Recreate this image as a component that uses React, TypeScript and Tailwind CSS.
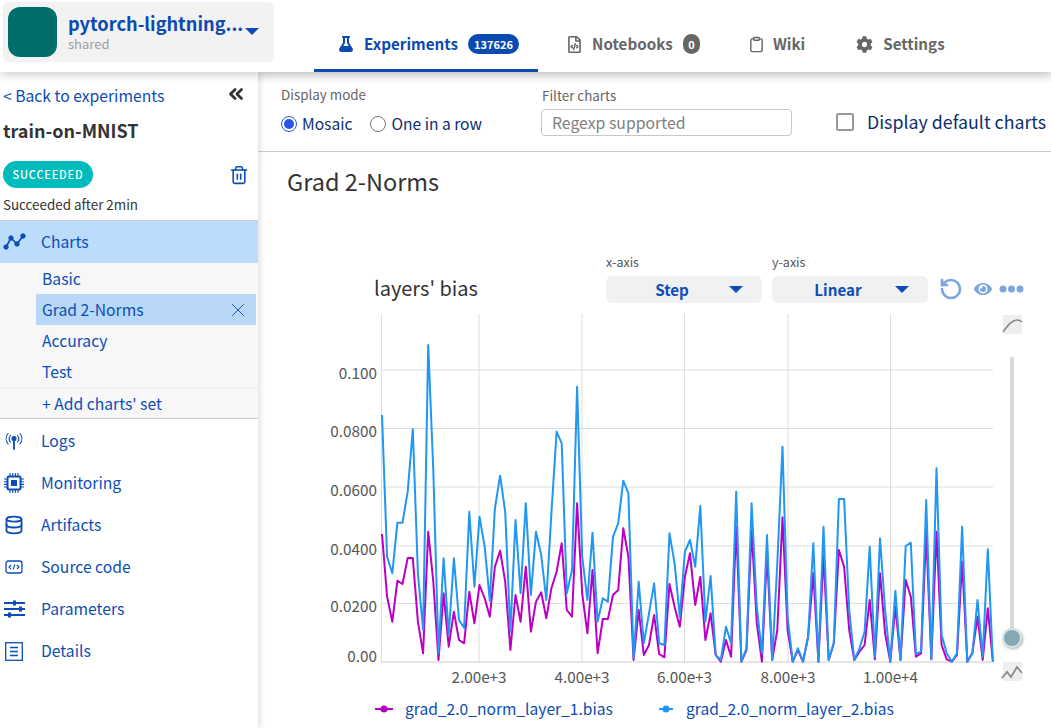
import { Clipboard, Database, RotateCcw, X, ChevronsLeft, Trash2 } from "lucide-react";
import { FaFlask, FaRegFileCode, FaCog, FaEye } from "react-icons/fa";

const B = "#0c4db5";

const seg = (base: number, ys: number[]) => ys.map((z) => base + z / 3);
const blue = [
  ...seg(330, [255, 680, 730, 578, 578, 485, 298, 730, 900, 45, 420, 970, 685, 915, 685, 870, 893, 545, 770, 560, 650, 812, 535, 437, 545, 905, 570, 790]),
  ...seg(380, [370, 645, 455, 525, 660, 400, 155, 190, 640, 570, 20, 530, 660, 458, 725, 655, 665, 470, 430, 302, 340, 835, 605, 790, 700, 610, 790, 795, 460, 550, 710, 515, 480, 560, 378, 725, 588, 825, 840, 740, 790, 335, 845, 805, 370, 680, 820, 465]),
  ...seg(430, [690, 400, 50, 560, 695, 655, 695, 620, 340, 695, 290, 690, 640, 207, 207, 540, 690, 655, 605, 350, 680, 325, 540, 695, 482, 690, 348, 338, 672, 665, 210, 688, 115, 615, 670, 695, 670, 290, 695, 670, 510, 680, 358, 695]),
];
const magenta = [
  ...seg(330, [612, 800, 875, 752, 762, 684, 684, 875, 970, 605, 755, 990, 790, 950, 845, 930, 940, 785, 880, 765, 805, 860, 710, 662, 755, 960, 795, 875]),
  ...seg(380, [560, 755, 665, 637, 715, 625, 575, 490, 690, 710, 370, 640, 760, 570, 820, 717, 717, 645, 630, 445, 530, 840, 690, 825, 795, 705, 822, 832, 612, 680, 740, 590, 520, 675, 590, 780, 700, 825, 845, 780, 830, 440, 845, 810, 450, 730, 845, 520]),
  ...seg(430, [690, 600, 262, 600, 695, 660, 695, 620, 430, 695, 375, 690, 640, 360, 410, 600, 690, 665, 645, 510, 688, 430, 610, 695, 530, 690, 450, 500, 680, 670, 310, 688, 305, 645, 688, 695, 675, 395, 695, 668, 560, 690, 535, 695]),
];
const pts = (a: number[]) => a.map((y, i) => `${(382 + i * 5.134).toFixed(1)},${y.toFixed(1)}`).join(" ");

function Caret({ className = "" }: { className?: string }) {
  return (
    <svg width="14" height="7" viewBox="0 0 14 7" className={className}>
      <path d="M0 0h14L7 7z" fill={B} />
    </svg>
  );
}

function ChartsIcon() {
  return (
    <svg width="24" height="18" viewBox="0 0 24 18" fill={B} stroke={B}>
      <polyline points="4,14 9,5 15,11 21,3" fill="none" strokeWidth="1.6" />
      <circle cx="4" cy="14" r="2.2" />
      <circle cx="9" cy="5" r="2.2" />
      <circle cx="15" cy="11" r="2.2" />
      <circle cx="21" cy="3" r="2.2" />
    </svg>
  );
}
function LogsIcon() {
  return (
    <svg width="20" height="20" viewBox="0 0 20 20" fill="none" stroke={B} strokeWidth="1.1" strokeLinecap="round">
      <circle cx="10" cy="7.5" r="2" fill={B} />
      <path d="M10 8v10" strokeWidth="1.8" />
      <path d="M6.5 4.5a5 5 0 0 0 0 6.5M13.5 4.5a5 5 0 0 1 0 6.5M4 2.5a8.5 8.5 0 0 0 0 10.5M16 2.5a8.5 8.5 0 0 1 0 10.5" />
    </svg>
  );
}
function ChipIcon() {
  return (
    <svg width="20" height="20" viewBox="0 0 20 20" fill="none" stroke={B}>
      <rect x="3.5" y="3.5" width="13" height="13" rx="1.5" strokeWidth="2" />
      <rect x="7" y="7" width="6" height="6" fill={B} stroke="none" />
      <path d="M0 6h3M0 8.7h3M0 11.4h3M0 14h3M17 6h3M17 8.7h3M17 11.4h3M17 14h3M6 0v3M8.7 0v3M11.4 0v3M14 0v3M6 17v3M8.7 17v3M11.4 17v3M14 17v3" strokeWidth="1.1" />
    </svg>
  );
}
function CodeIcon() {
  return (
    <svg width="18" height="14" viewBox="0 0 18 14" fill="none" stroke={B}>
      <rect x="1" y="1" width="16" height="12" rx="2.5" strokeWidth="1.3" />
      <path d="M6 5 4 7l2 2M12 5l2 2-2 2M10 4.5 8 9.5" strokeWidth="1.1" />
    </svg>
  );
}
function ParamsIcon() {
  return (
    <svg width="21" height="18" viewBox="0 0 21 18" fill={B}>
      <rect x="0" y="2" width="21" height="2" />
      <rect x="0" y="8" width="21" height="2" />
      <rect x="0" y="14" width="21" height="2" />
      <rect x="9" y="0.5" width="3" height="5" />
      <rect x="15" y="6.5" width="3" height="5" />
      <rect x="4" y="12.5" width="3" height="5" />
    </svg>
  );
}
function DetailsIcon() {
  return (
    <svg width="18" height="19" viewBox="0 0 18 19" fill="none" stroke={B}>
      <rect x="0.7" y="0.7" width="16.6" height="17.6" strokeWidth="1.3" />
      <path d="M5 5.5h8M5 9.5h8M5 13.5h8" strokeWidth="1.6" />
    </svg>
  );
}

function Tab({ icon, label, badge, active, badgeDark, className = "" }: { icon: React.ReactNode; label: string; badge?: string; active?: boolean; badgeDark?: boolean; className?: string }) {
  return (
    <div className={`flex h-[72px] items-center border-b-[3px] pt-[19px] ${active ? "border-[#0b4ab0]" : "border-transparent"} ${className}`}>
      {icon}
      <span className={`text-[15.2px] font-semibold leading-none ${active ? "text-[#0b4ab0]" : "text-[#666666]"}`}>{label}</span>
      {badge && (
        <span className={`ml-[10px] flex h-[20px] items-center justify-center rounded-full text-white font-semibold text-[11px] leading-none ${badgeDark ? "w-[17px] bg-[#666666]" : "w-[51px] bg-[#0b4ab0]"}`}>
          {badge}
        </span>
      )}
    </div>
  );
}

function NavRow({ icon, label }: { icon: React.ReactNode; label: string }) {
  return (
    <div className="flex h-[42px] items-center text-[15.7px] leading-none text-[#0c4db5]">
      <span className="flex w-[41px] justify-center pr-[13px]">{icon}</span>
      {label}
    </div>
  );
}

function Select({ label, value, className = "" }: { label: string; value: string; className?: string }) {
  return (
    <div className={`flex w-[156px] flex-col ${className}`}>
      <span className="h-[21px] text-[12.5px] leading-[14px] text-[#555555]">{label}</span>
      <div className="flex h-[27px] items-center rounded-md bg-[#f0f1f3]">
        <span className="w-[123px] pl-[9px] text-center text-[15.2px] font-semibold leading-none text-[#0c4db5]">{value}</span>
        <Caret />
      </div>
    </div>
  );
}

export default function App() {
  const yTicks: [number, string][] = [[370, "0.100"], [428.5, "0.0800"], [487, "0.0600"], [546, "0.0400"], [603.5, "0.0200"]];
  const xTicks: [number, string][] = [[479, "2.00e+3"], [582, "4.00e+3"], [684.5, "6.00e+3"], [788, "8.00e+3"], [890.5, "1.00e+4"]];
  return (
    <div className="flex h-[728px] w-[1051px] flex-col overflow-hidden bg-white [font-family:'Noto_Sans_CJK_JP',sans-serif]">
      <header className="relative z-20 flex h-[72px] shrink-0 bg-white shadow-[0_2px_10px_rgba(0,0,0,0.22)]">
        <div className="ml-[3px] mt-[2px] flex h-[60px] w-[271px] items-center rounded-md bg-[#f2f2f2] pl-[5px]">
          <div className="h-[50px] w-[49px] rounded-xl bg-[#006f6c]" />
          <div className="ml-[11px] flex w-[168px] flex-col">
            <span className="text-[18.2px] font-semibold leading-[24px] text-[#0b4ab0] whitespace-nowrap">pytorch-lightning...</span>
            <span className="text-[13px] leading-[18px] text-[#a0a0a0]">shared</span>
          </div>
          <Caret className="ml-[9px] -mt-[1px]" />
        </div>
        <div className="ml-[40px] flex">
          <Tab active className="w-[224px] pl-[24px]" icon={<FaFlask size={16} className="mr-[10px] text-[#0b4ab0]" />} label="Experiments" badge="137626" />
          <Tab className="ml-[28px]" icon={<FaRegFileCode size={17} className="mr-[9px] text-[#666666]" />} label="Notebooks" badge="0" badgeDark />
          <Tab className="ml-[48px]" icon={<Clipboard size={17} className="mr-[8px] text-[#666666]" />} label="Wiki" />
          <Tab className="ml-[51px]" icon={<FaCog size={17} className="mr-[10px] text-[#666666]" />} label="Settings" />
        </div>
      </header>

      <div className="flex min-h-0 flex-1">
        <aside className="relative z-10 flex w-[258px] shrink-0 flex-col bg-white shadow-[3px_0_5px_rgba(0,0,0,0.1)]">
          <div className="flex h-[47px] items-center justify-between pl-[3px] pr-[11px]">
            <span className="text-[15.7px] leading-none text-[#0c4db5]">&lt; Back to experiments</span>
            <ChevronsLeft size={22} strokeWidth={3} className="mb-[3px] text-[#333333]" />
          </div>
          <div className="flex h-[21px] items-center pl-[3px] text-[18px] font-bold leading-none text-[#333333]">train-on-MNIST</div>
          <div className="mt-[21px] flex items-center justify-between pl-[3px] pr-[9px]">
            <span className="flex h-[27px] w-[90px] items-center justify-center rounded-full bg-[#00bbbb] text-[11px] font-medium leading-none tracking-[0.8px] text-white">SUCCEEDED</span>
            <Trash2 size={20} strokeWidth={1.9} className="text-[#0c4db5]" />
          </div>
          <div className="mt-[8px] flex h-[18px] items-center pl-[3px] text-[13.4px] leading-none text-[#333333]">Succeeded after 2min</div>

          <div className="mt-[6px] border-t border-[#cccccc]">
            <div className="flex h-[42px] items-center bg-[#bbdcfb] text-[15.7px] leading-none text-[#0c4db5]">
              <span className="flex w-[41px] justify-center pr-[13px]"><ChartsIcon /></span>
              Charts
            </div>
            <div className="bg-[#f7f7f7] text-[15.7px] leading-none text-[#0c4db5]">
              <div className="flex h-[31px] items-center pl-[42px]">Basic</div>
              <div className="ml-[36px] flex h-[31px] w-[220px] items-center justify-between bg-[#b9d8f7] pl-[6px] pr-[7px]">
                Grad 2-Norms
                <X size={22} strokeWidth={1} />
              </div>
              <div className="flex h-[31px] items-center pl-[42px]">Accuracy</div>
              <div className="flex h-[31px] items-center pl-[42px]">Test</div>
              <div className="flex h-[32px] items-center border-t-[2px] border-b border-t-[#f0f0f0] border-b-[#cccccc] pl-[42px]">+ Add charts' set</div>
            </div>
          </div>
          <div className="mt-[1px]">
            <NavRow icon={<LogsIcon />} label="Logs" />
            <NavRow icon={<ChipIcon />} label="Monitoring" />
            <NavRow icon={<Database size={20} strokeWidth={2.2} color={B} />} label="Artifacts" />
            <NavRow icon={<CodeIcon />} label="Source code" />
            <NavRow icon={<ParamsIcon />} label="Parameters" />
            <NavRow icon={<DetailsIcon />} label="Details" />
          </div>
        </aside>

        <main className="flex min-w-0 flex-1 flex-col">
          <div className="flex h-[80px] shrink-0 border-b border-[#cccccc] bg-gradient-to-b from-[#efefef] from-0% to-white to-[14%] pl-[23px]">
            <div className="w-[260px] shrink-0 pt-[12px]">
              <div className="h-[20px] text-[13.4px] leading-[20px] text-[#666666]">Display mode</div>
              <div className="mt-[10px] flex h-[20px] items-center text-[15.6px] leading-none text-[#0b2f6f]">
                <span className="flex h-[16px] w-[16px] items-center justify-center rounded-full border border-[#2855e8]">
                  <span className="h-[10px] w-[10px] rounded-full bg-[#2855e8]" />
                </span>
                <span className="ml-[5px]">Mosaic</span>
                <span className="ml-[18px] h-[16px] w-[16px] rounded-full border border-[#767676]" />
                <span className="ml-[5px]">One in a row</span>
              </div>
            </div>
            <div className="w-[251px] shrink-0 pt-[13px]">
              <div className="h-[20px] pl-[1px] text-[13.4px] leading-[20px] text-[#666666]">Filter charts</div>
              <div className="mt-[4px] flex h-[27px] items-center rounded-[4px] border border-[#c8c8c8] pl-[10px] text-[15.8px] leading-none text-[#808080]">Regexp supported</div>
            </div>
            <div className="ml-[44px] mt-[41px] flex h-[18px] shrink-0 items-center">
              <span className="h-[18px] w-[18px] rounded-[2px] border-2 border-[#999999]" />
              <span className="ml-[13px] text-[17.8px] leading-none whitespace-nowrap text-[#0b2f6f]">Display default charts</span>
            </div>
          </div>

          <h1 className="ml-[29px] mt-[13px] h-[32px] text-[23.5px] font-normal leading-[32px] text-[#333333]">Grad 2-Norms</h1>

          <div className="mt-[58px] flex h-[48px] items-end pl-[116px]">
            <span className="mb-[1px] w-[232px] text-[20px] leading-[28px] text-[#333333]">layers' bias</span>
            <Select label="x-axis" value="Step" />
            <Select label="y-axis" value="Linear" className="ml-[10px]" />
            <div className="mb-[2px] ml-[11px] flex items-center">
              <RotateCcw size={24} strokeWidth={2.7} color="#7da6de" />
              <FaEye size={18} color="#7da6de" className="ml-[11px]" />
              <svg width="25" height="8" viewBox="0 0 25 8" fill="#7da6de" className="ml-[7px]"><circle cx="4" cy="4" r="3.5" /><circle cx="12.5" cy="4" r="3.5" /><circle cx="21" cy="4" r="3.5" /></svg>
            </div>
          </div>

          <div className="flex h-[385px]">
            <svg width="742" height="385" viewBox="258 303 742 385" className="shrink-0">
              {yTicks.map(([y]) => <line key={y} x1="382" x2="993" y1={y} y2={y} stroke="#dddddd" strokeWidth="1" />)}
              {xTicks.map(([x]) => <line key={x} x1={x} x2={x} y1="314" y2="662" stroke="#dddddd" strokeWidth="1" />)}
              <line x1="381.5" x2="381.5" y1="314" y2="662" stroke="#dddddd" />
              <line x1="381" x2="993" y1="662" y2="662" stroke="#cccccc" />
              {yTicks.map(([y, t]) => <text key={t} x="377" y={y + 8.5} textAnchor="end" fontSize="15.3" fill="#555555">{t}</text>)}
              <text x="377" y="662" textAnchor="end" fontSize="15.3" fill="#555555">0.00</text>
              {xTicks.map(([x, t]) => <text key={t} x={x} y="683" textAnchor="middle" fontSize="15.3" fill="#555555">{t}</text>)}
              <polyline points={pts(magenta)} fill="none" stroke="#bb00c4" strokeWidth="2" strokeLinejoin="round" />
              <polyline points={pts(blue)} fill="none" stroke="#2196f3" strokeWidth="2" strokeLinejoin="round" />
            </svg>
            <div className="ml-[2px] flex w-[20px] flex-col items-center">
              <div className="mt-[12px] flex h-[19px] w-[19px] items-center justify-center bg-[#eeeeee]">
                <svg width="22" height="16" viewBox="0 0 22 16" fill="none" stroke="#8a8a8a" strokeWidth="1.6" className="shrink-0"><path d="M2 15C7 8 11 3 16 3c2 0 4 1 5 2" /></svg>
              </div>
              <div className="mt-[23px] h-[283px] w-[4px] shrink-0 bg-[#d9d9d9]" />
              <div className="mt-[-12px] h-[20px] w-[20px] shrink-0 rounded-full border-2 border-[#d5e6ea] bg-[#84a9b4] shadow-[1px_1px_3px_rgba(0,0,0,0.35)]" />
              <div className="mt-[14px] flex h-[19px] w-[19px] items-center justify-center bg-[#eeeeee]">
                <svg width="22" height="16" viewBox="0 0 22 16" fill="none" stroke="#8a8a8a" strokeWidth="1.8" className="shrink-0"><path d="M1 14l5-6 4 5 6-10 5 6" /></svg>
              </div>
            </div>
          </div>

          <div className="mt-[9px] flex h-[24px] items-center pl-[117px] text-[15.6px] leading-none text-[#0c4db5]">
            <svg width="18" height="8" viewBox="0 0 18 8"><path d="M0 4h18" stroke="#bb00c4" strokeWidth="2" /><circle cx="9" cy="4" r="3.5" fill="#bb00c4" /></svg>
            <span className="ml-[12px] w-[252px]">grad_2.0_norm_layer_1.bias</span>
            <svg width="18" height="8" viewBox="0 0 18 8"><path d="M2 4h14" stroke="#2196f3" strokeWidth="2" /><circle cx="9" cy="4" r="3.5" fill="#2196f3" /></svg>
            <span className="ml-[11px]">grad_2.0_norm_layer_2.bias</span>
          </div>
        </main>
      </div>
    </div>
  );
}
